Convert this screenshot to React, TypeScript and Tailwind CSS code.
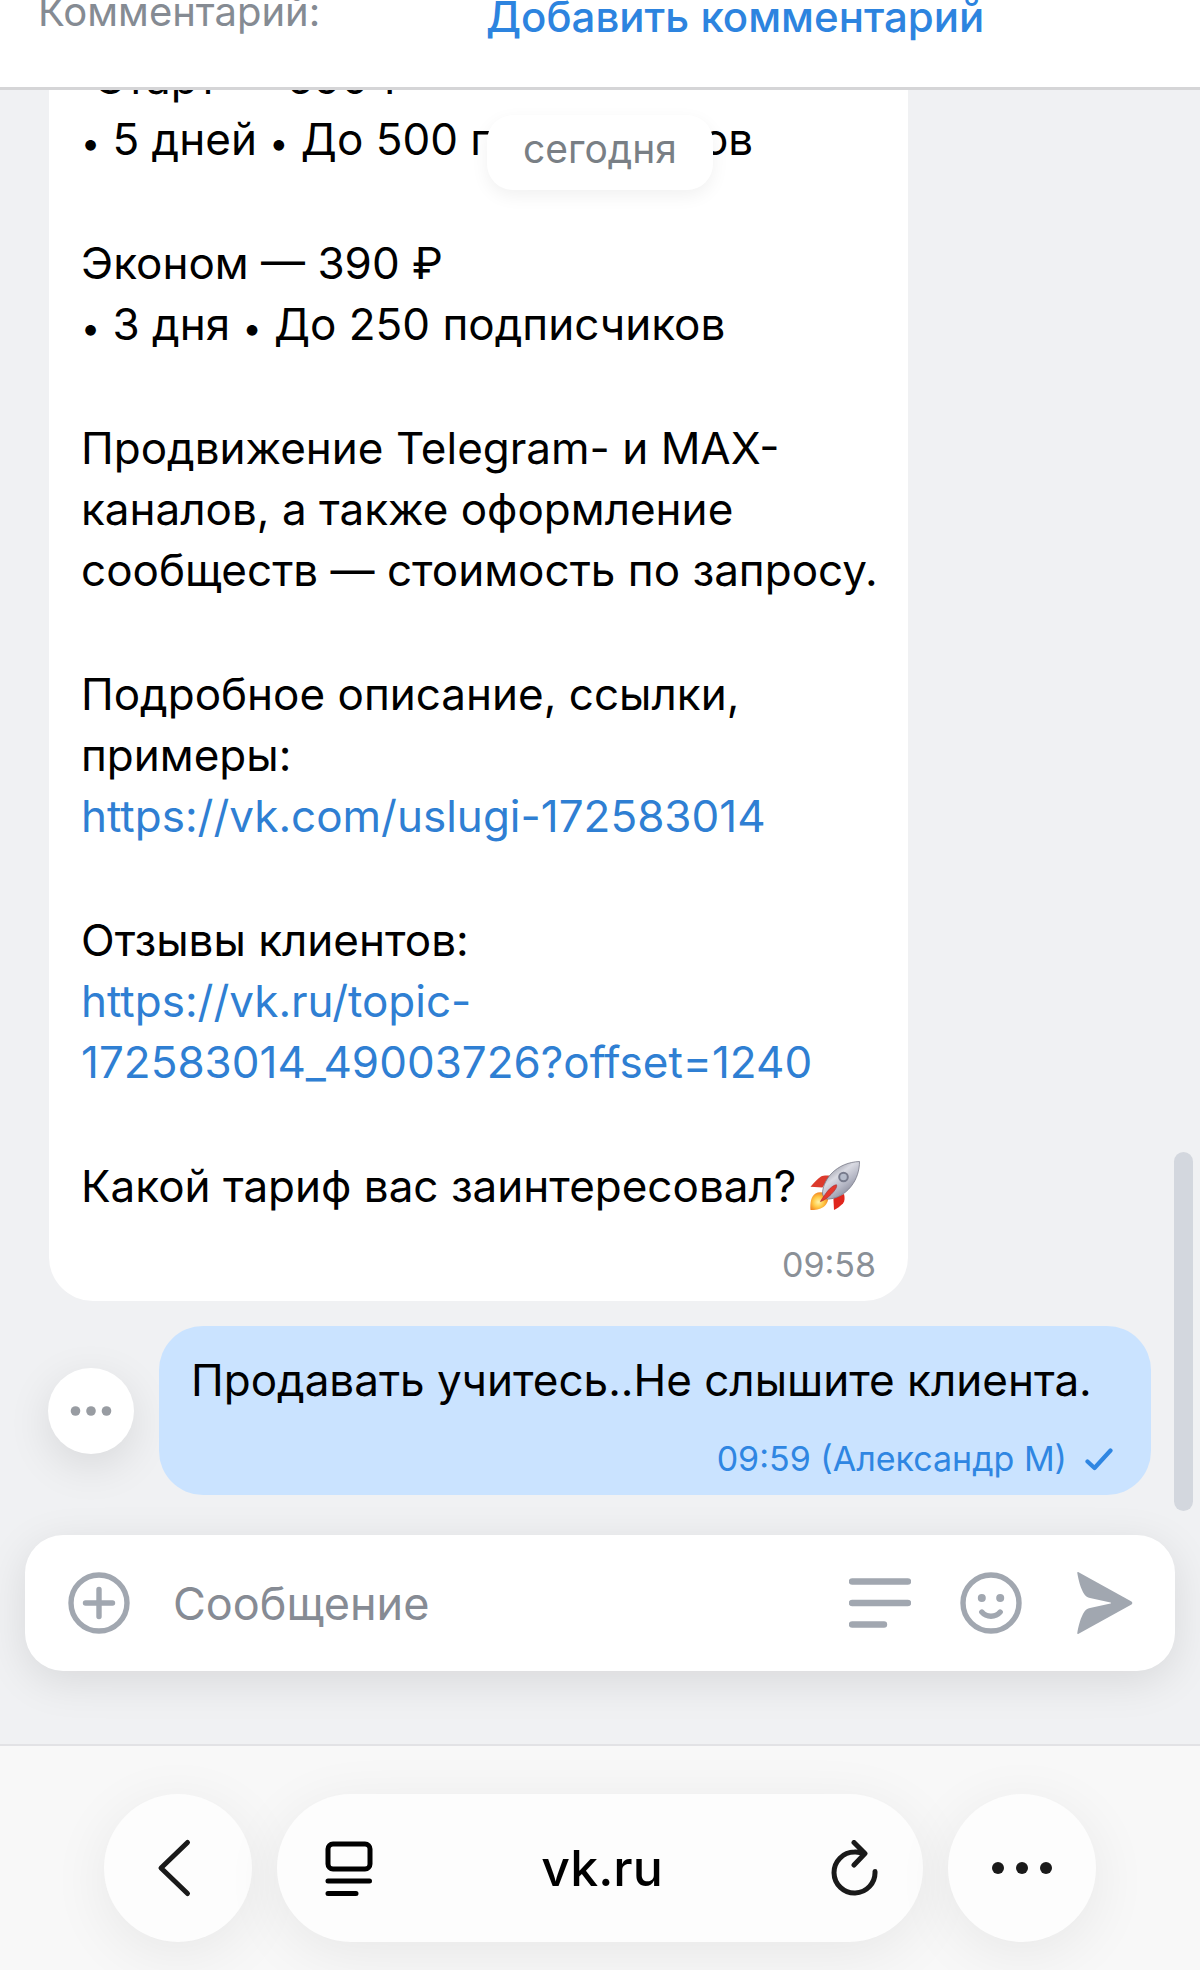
const lineClass = 'block whitespace-nowrap';

function Bullet() {
  return <span className="text-[34px] leading-none">•</span>;
}

function Rocket() {
  return (
    <svg className="inline-block w-[52px] h-[52px] align-[-10px]" viewBox="0 0 52 52" role="img" aria-label="🚀">
      <defs>
        <linearGradient id="hull" x1="0.2" y1="0.1" x2="0.8" y2="0.9">
          <stop offset="0" stopColor="#8d8f9c" />
          <stop offset="0.35" stopColor="#d9dae2" />
          <stop offset="0.65" stopColor="#b3b5c3" />
          <stop offset="1" stopColor="#7d7f90" />
        </linearGradient>
        <radialGradient id="flame" cx="0.45" cy="0.55" r="0.6">
          <stop offset="0" stopColor="#fff3a6" />
          <stop offset="0.5" stopColor="#ffc844" />
          <stop offset="1" stopColor="#f07a1c" />
        </radialGradient>
      </defs>
      <path d="M12 16.5C14 15.5 18 15.3 21 15.8L13.5 27.5L1.5 26.8C5 23 8.5 18.5 12 16.5Z" fill="#dc3a2c" />
      <path d="M35 34C35.8 37 36 41 34 43.5C31.5 46 28 48.5 25 50L24.4 38.5Z" fill="#e0261d" />
      <path d="M1.5 50C1 43 2 36 6.5 33.5C10 31.5 16 32 18.5 35.5C20.5 39 18 44.5 14.5 47C11 49.5 6 50 1.5 50Z" fill="url(#flame)" />
      <path d="M50.5 1.5C40 2 30 5.5 22 14C16 20.5 13.5 28 13.5 34C15 38 17 39.5 20 39C28 38.5 36 34 42 26.5C48 19 50.5 10 50.5 1.5Z" fill="url(#hull)" stroke="#777987" strokeWidth="0.8" />
      <circle cx="34.5" cy="17" r="4.3" fill="#b5bccb" stroke="#777b8c" strokeWidth="2" />
      <path d="M27.5 24.8C24.5 25 20.5 28.5 17.5 32.5C15.5 35.5 13 38.5 11.5 41.5C15 40.5 19 37.5 22 34.5C25.5 31 28.5 27 27.5 24.8Z" fill="#e5392d" stroke="#a93137" strokeWidth="0.7" />
    </svg>
  );
}

function Dots({ className, radius, step }: { className: string; radius: number; step: number }) {
  return (
    <svg className={className} viewBox="0 0 60 20" fill="currentColor">
      <circle cx={30 - step} cy="10" r={radius} />
      <circle cx="30" cy="10" r={radius} />
      <circle cx={30 + step} cy="10" r={radius} />
    </svg>
  );
}

export default function App() {
  return (
    <div className="h-screen flex flex-col overflow-hidden bg-[#f0f1f3] font-['Inter',sans-serif] text-black">
      {/* Contact comment */}
      <header className="shrink-0 flex items-start h-[90px] pl-[38px] border-b-3 border-[#d5d5d7] bg-white">
        <span className="w-[448px] text-[40px] leading-6 text-[#858b93]">Комментарий:</span>
        <button className="pt-[5px] text-[42px] leading-6 font-medium text-[#2d84df]">Добавить комментарий</button>
      </header>

      {/* Messages */}
      <main className="relative flex-1 min-h-0 flex flex-col justify-end overflow-hidden">
        <div className="absolute top-[25px] inset-x-0 flex justify-center">
          <div className="rounded-[26px] bg-white px-9 pt-2 pb-4 text-[39px] leading-[51px] text-[#797f85] shadow-[0_6px_18px_rgba(0,0,0,0.06)]">
            сегодня
          </div>
        </div>

        <article className="shrink-0 self-start ml-[49px] rounded-[44px] bg-white px-8 pt-6 pb-[14px] w-[859px]">
          <div className="flex flex-col gap-[63px] text-[44px] leading-[61px]">
            <p>
              <span className={lineClass}>&nbsp;Старт — 590 ₽</span>
              <span className={lineClass}><Bullet /> 5 дней <Bullet /> До 500 подписчиков</span>
            </p>
            <p>
              <span className={lineClass}>Эконом — 390 ₽</span>
              <span className={lineClass}><Bullet /> 3 дня <Bullet /> До 250 подписчиков</span>
            </p>
            <p>
              <span className={lineClass}>Продвижение Telegram- и MAX-</span>
              <span className={lineClass}>каналов, а также оформление</span>
              <span className={lineClass}>сообществ — стоимость по запросу.</span>
            </p>
            <p>
              <span className={lineClass}>Подробное описание, ссылки,</span>
              <span className={lineClass}>примеры:</span>
              <a href="https://vk.com/uslugi-172583014" className="block text-[#2f7fd3]">
                https://vk.com/uslugi-172583014
              </a>
            </p>
            <p>
              <span className={lineClass}>Отзывы клиентов:</span>
              <a href="https://vk.ru/topic-172583014_49003726?offset=1240" className="block text-[#2f7fd3]">
                <span className={lineClass}>https://vk.ru/topic-</span>
                <span className={lineClass}>172583014_49003726?offset=1240</span>
              </a>
            </p>
            <p className="whitespace-nowrap">
              Какой тариф вас заинтересовал? <Rocket />
            </p>
          </div>
          <time className="block mt-[26px] text-right text-[34px] leading-[44px] text-[#8a9097]">09:58</time>
        </article>

        <div className="shrink-0 flex items-center gap-[25px] mt-[25px] ml-12 mr-[49px]">
          <button
            aria-label="Ещё"
            className="shrink-0 flex items-center justify-center size-[86px] rounded-full bg-white text-[#989ca2] shadow-[0_12px_44px_rgba(0,0,0,0.1)]"
          >
            <Dots className="w-[60px] h-5" radius={4.8} step={15.5} />
          </button>
          <article className="flex-1 rounded-[44px] bg-[#cae3ff] px-8 pt-6 pb-[14px]">
            <p className="whitespace-nowrap text-[44px] leading-[61px]">Продавать учитесь..Не слышите клиента.</p>
            <div className="flex items-center justify-end gap-[18px] mt-[26px] pr-[6px] text-[34px] leading-[44px] text-[#2f86e2]">
              <span>09:59 (Александр М)</span>
              <svg className="w-7 h-6" viewBox="0 0 28 24" fill="none" stroke="currentColor" strokeWidth="4.2" strokeLinecap="round" strokeLinejoin="round">
                <path d="M2.5 14.5L9.5 21L25.5 3.5" />
              </svg>
            </div>
          </article>
        </div>

        {/* Composer */}
        <form className="shrink-0 relative flex items-center h-[136px] mt-10 mb-[73px] mx-[25px] rounded-[38px] bg-white pl-[43px] pr-[42px] text-[#a1a7b0] shadow-[0_10px_44px_rgba(0,0,0,0.1)]">
          <button type="button" aria-label="Прикрепить" className="shrink-0">
            <svg className="size-[62px]" viewBox="0 0 62 62" fill="none" stroke="currentColor" strokeWidth="5.4" strokeLinecap="round">
              <circle cx="31" cy="31" r="28" />
              <path d="M31 17.5V44.5M17.500 31H44.500" />
            </svg>
          </button>
          <input
            type="text"
            aria-label="Сообщение"
            placeholder="Сообщение"
            className="flex-1 min-w-0 ml-[43px] text-[45px] leading-[61px] outline-none placeholder:text-[#868b94]"
          />
          <div className="shrink-0 flex items-center gap-[49px]">
            <button type="button" aria-label="Шаблоны">
              <svg className="size-[62px]" viewBox="0 0 62 62" fill="none" stroke="currentColor" strokeWidth="6.4" strokeLinecap="round">
                <path d="M3 9.5H59M3 31H59M3 52.5H35" />
              </svg>
            </button>
            <button type="button" aria-label="Эмодзи">
              <svg className="size-[62px]" viewBox="0 0 62 62" fill="none" stroke="currentColor" strokeWidth="5.4" strokeLinecap="round">
                <circle cx="31" cy="31" r="28" />
                <circle cx="21.8" cy="26" r="4" fill="currentColor" stroke="none" />
                <circle cx="40.2" cy="26" r="4" fill="currentColor" stroke="none" />
                <path d="M21.8 40C26.5 45.6 35.5 45.6 40.2 40" />
              </svg>
            </button>
            <button type="submit" aria-label="Отправить">
              <svg className="size-[62px]" viewBox="-2 0 62 62" fill="currentColor">
                <path d="M4.3 1C4 .2 4.8 -.3 5.6 .3L58.5 29.6C59.6 30.3 59.6 31.7 58.5 32.4L5.6 61.7C4.8 62.3 4 61.8 4.3 61C5.5 54 7.5 45.5 11.5 39.5C12.8 37.6 14.5 36.6 17 36.1L37.5 31.5C38.3 31.3 38.3 30.7 37.5 30.5L17 25.9C14.5 25.4 12.8 24.4 11.5 22.5C7.5 16.5 5.5 8 4.3 1Z" />
              </svg>
            </button>
          </div>
        </form>

        <div className="absolute right-[7px] bottom-[233px] w-[19px] h-[359px] rounded-full bg-[#d3d7de]" />
      </main>

      {/* Browser bar */}
      <nav className="shrink-0 flex gap-[25px] border-t-2 border-[#e2e2e5] bg-[#f8f8f8] px-[104px] pt-12 pb-7 text-[#1a1a1a]">
        <button
          aria-label="Назад"
          className="shrink-0 flex items-center justify-center size-[148px] rounded-full bg-[#fdfdfd] shadow-[0_12px_60px_rgba(0,0,0,0.07)]"
        >
          <svg className="w-10 h-[60px] mr-2" viewBox="0 0 40 60" fill="none" stroke="currentColor" strokeWidth="5" strokeLinecap="round" strokeLinejoin="round">
            <path d="M33.5 4.5L7 30L33.5 55.5" />
          </svg>
        </button>
        <div className="flex-1 flex items-center justify-between rounded-full bg-[#fdfdfd] pl-12 pr-11 shadow-[0_12px_60px_rgba(0,0,0,0.07)]">
          <button aria-label="Режим чтения" className="text-black">
            <svg className="w-12 h-14" viewBox="0 -1 48 56" fill="none" stroke="currentColor" strokeWidth="5" strokeLinecap="round">
              <rect x="3" y="3" width="42" height="25" rx="5" />
              <path d="M3 40H44.5M3 52.5H31" />
            </svg>
          </button>
          <button className="text-[50px] leading-[60px] font-medium text-black">vk.ru</button>
          <button aria-label="Обновить">
            <svg className="w-12 h-14" viewBox="0 0 48 56" fill="none" stroke="currentColor" strokeWidth="5" strokeLinecap="round" strokeLinejoin="round">
              <path d="M44 31.5A20.5 20.5 0 1 1 23.5 12C27 11.8 30 12.500 33 14M23 2.500L34 13.500L23 25" />
            </svg>
          </button>
        </div>
        <button
          aria-label="Меню"
          className="shrink-0 flex items-center justify-center size-[148px] rounded-full bg-[#fdfdfd] shadow-[0_12px_60px_rgba(0,0,0,0.07)]"
        >
          <Dots className="w-[60px] h-5" radius={6} step={24} />
        </button>
      </nav>
    </div>
  );
}
